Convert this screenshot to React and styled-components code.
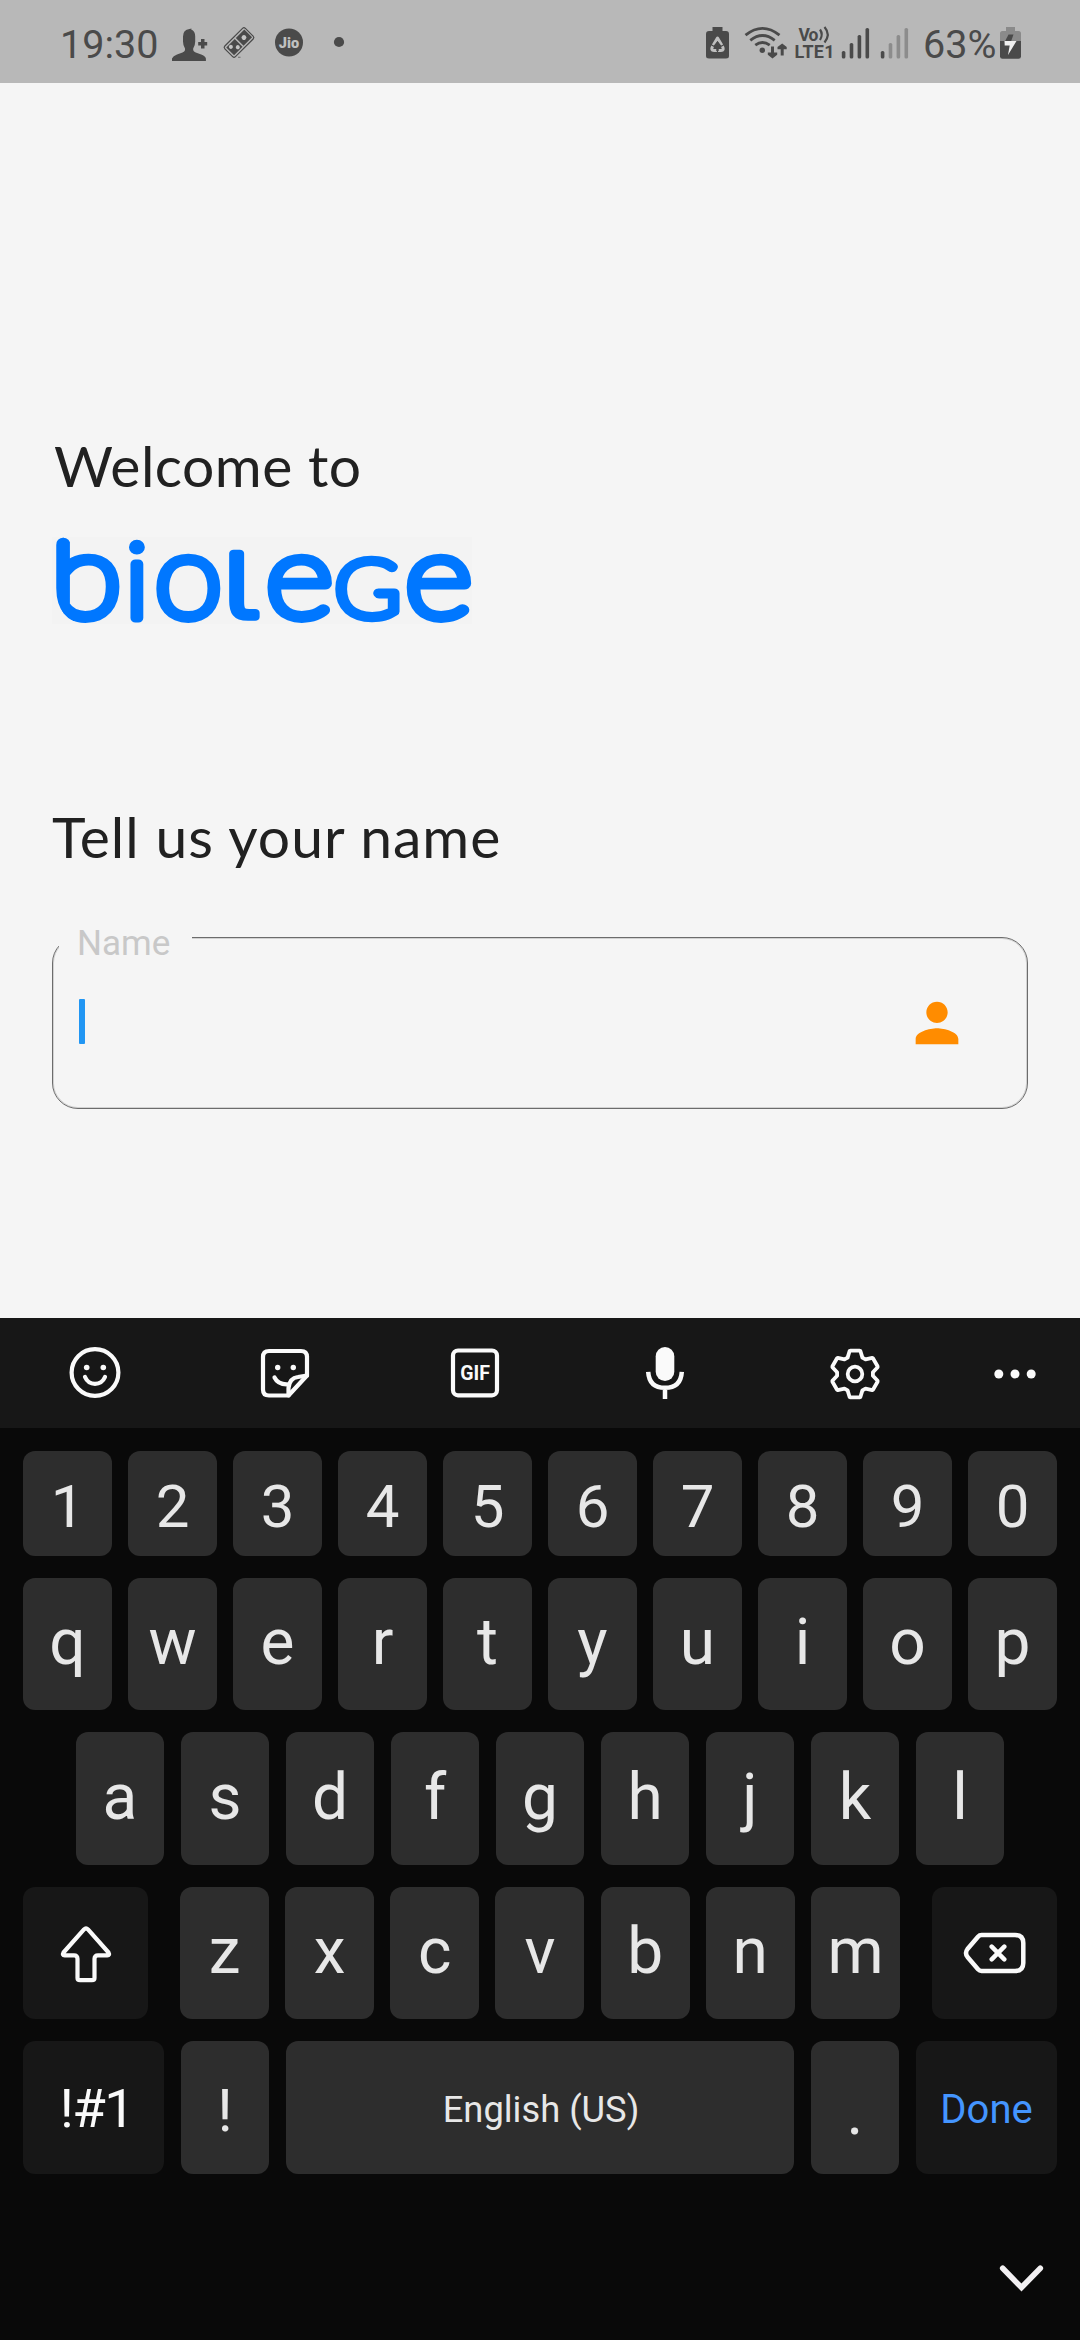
import React from "react";
import styled, { createGlobalStyle } from "styled-components";

const Global = createGlobalStyle`
  html, body { margin: 0; padding: 0; background: #f5f5f5; }
  *, *::before, *::after { box-sizing: border-box; }
`;

const Screen = styled.div`
  width: 1080px;
  height: 2340px;
  display: flex;
  flex-direction: column;
  overflow: hidden;
  background: #f5f5f5;
  font-family: Roboto, "Liberation Sans", sans-serif;
`;

/* ---------- status bar ---------- */

const StatusBar = styled.header`
  height: 83px;
  flex: none;
  display: flex;
  justify-content: space-between;
  padding: 0 58px 0 60px;
  background: #b8b8b8;
  color: #4a4a4a;
`;

const StatusGroup = styled.div`
  display: flex;
  align-items: stretch;
`;

const StatusText = styled.span`
  width: ${(p) => p.$width}px;
  font-size: 39.5px;
  line-height: 89px;
  white-space: nowrap;
`;

const Glyph = styled.svg`
  display: block;
  flex: none;
  overflow: visible;
`;

const StatusIcon = ({ x, w, children }) => (
  <Glyph width={w} height={83} viewBox={`${x} 0 ${w} 83`} fill="#4a4a4a">
    {children}
  </Glyph>
);

const Bars = ({ x, tops, dim }) =>
  tops.map((top, i) => (
    <rect
      key={top}
      x={x + i * 7.9}
      y={top}
      width="3.6"
      height={58.5 - top}
      rx="1.6"
      fill={dim && i > 0 ? "#8c8c8c" : "#4a4a4a"}
    />
  ));

const tops = [51, 43, 35, 28];

/* ---------- form ---------- */

const Main = styled.main`
  height: 1235px;
  flex: none;
  display: flex;
  flex-direction: column;
  padding: 347px 52px 0;
`;

const Heading = styled.h1`
  margin: 0;
  height: 70px;
  padding-left: ${(p) => p.$indent || 0}px;
  font: 400 57px/70px Lato, "Open Sans", sans-serif;
  letter-spacing: ${(p) => p.$spacing}px;
  color: #212121;
  white-space: nowrap;
`;

const Logo = styled.svg`
  display: block;
  width: 420px;
  height: 87px;
  margin: 37px 0 177px;
  overflow: visible;
  background: #f3f3f3;
`;

const LogoLetter = styled.text`
  font-family: ${(p) => p.$family || "Lato"}, sans-serif;
  font-weight: ${(p) => p.$weight || 100};
  font-size: 100px;
  fill: #0077ff;
  stroke: #0077ff;
  stroke-width: ${(p) => p.$stroke || 9.2}px;
  stroke-linejoin: round;
`;

const Field = styled.label`
  position: relative;
  display: flex;
  align-items: center;
  justify-content: space-between;
  width: 976px;
  height: 172px;
  margin-top: 66px;
  padding: 0 58px 0 26px;
  border: 1px solid #6c6c6c;
  border-radius: 26px;
  box-shadow: inset 0 0 0 1px rgba(0, 0, 0, 0.14);
`;

const FieldLabel = styled.span`
  position: absolute;
  left: 6px;
  top: -15px;
  width: 133px;
  height: 42px;
  padding-left: 18px;
  background: #f5f5f5;
  color: #c8c8c8;
  font-size: 35px;
  line-height: 42px;
`;

const Caret = styled.span`
  width: 6px;
  height: 45px;
  margin-top: -4px;
  border-radius: 1px;
  background: #2196f3;
`;

/* ---------- keyboard ---------- */

const Keyboard = styled.section`
  flex: 1;
  display: flex;
  flex-direction: column;
  background: #090909;
`;

const Toolbar = styled.div`
  height: 110px;
  display: grid;
  grid-template-columns: repeat(5, 190px) 130px;
  align-items: center;
  justify-items: center;
  background: #171717;
`;

const Keys = styled.div`
  display: flex;
  flex-direction: column;
  gap: 22px;
  padding: 23px 23px 0;
`;

const KeyRow = styled.div`
  display: flex;
  justify-content: space-between;
  height: ${(p) => p.$height}px;
  padding: 0 ${(p) => p.$inset || 0}px;
`;

const KeyCluster = styled.div`
  display: flex;
  justify-content: space-between;
  width: 720px;
`;

const Key = styled.button`
  display: flex;
  align-items: center;
  justify-content: center;
  width: ${(p) => p.$width || 89}px;
  height: 100%;
  border: 0;
  border-radius: 12px;
  padding: ${(p) => Math.max(p.$drop || 0, 0) * 2}px 0 ${(p) => Math.max(-(p.$drop || 0), 0) * 2}px ${(p) => (p.$nudge || 0) * 2}px;
  background: ${(p) => (p.$dark ? "#171717" : "#2d2d2d")};
  color: ${(p) => p.$color || "#e7e7e7"};
  font-family: inherit;
  font-size: ${(p) => p.$size || 64}px;
  line-height: 1;
  letter-spacing: ${(p) => p.$spacing || 0}px;
  white-space: nowrap;
`;

const BottomBar = styled.div`
  display: flex;
  justify-content: flex-end;
  padding: 88px 34px 0 0;
`;

const GifLabel = styled.text`
  font: 700 19.5px Roboto, sans-serif;
  fill: #fafafa;
`;

const lineProps = {
  fill: "none",
  stroke: "#fafafa",
  strokeWidth: 4.2,
  strokeLinecap: "round",
  strokeLinejoin: "round",
};

const gearPath = (() => {
  const tooth = [
    [-7.4, -16.4],
    [-5.4, -23],
    [-4.6, -23.4],
    [4.6, -23.4],
    [5.4, -23],
    [7.4, -16.4],
  ];
  const points = [];
  for (let k = 0; k < 6; k += 1) {
    const a = (k * Math.PI) / 3;
    tooth.forEach(([x, y]) => {
      points.push([
        (x * Math.cos(a) - y * Math.sin(a)).toFixed(2),
        (x * Math.sin(a) + y * Math.cos(a)).toFixed(2),
      ]);
    });
  }
  return `M${points.map((p) => p.join(" ")).join("L")}Z`;
})();

const ToolIcon = ({ children }) => (
  <Glyph width={60} height={60} viewBox="-30 -30 60 60">
    {children}
  </Glyph>
);

export default function App() {
  return (
    <Screen>
      <Global />
      <StatusBar>
        <StatusGroup>
          <StatusText $width={112}>19:30</StatusText>
          <StatusIcon x={172} w={51}>
            <path d="M172 61v-2.500q1-2.500 5-4l5.500-2q3-1.200 2.500-4-2-3-2-7v-5q0-7 6.500-7.500l2-.5-.3 1q4 1.500 4 7v5q0 4-2 7-.5 2.800 2.500 4l5.500 2q4 1.500 4.700 4v2.500z" />
            <path d="M201 39h3.500v3h2.700v3.500h-2.700v3H201v-3h-2.800V42h2.800z" />
          </StatusIcon>
          <StatusIcon x={223} w={52}>
            <g transform="rotate(-45 239 42.500)">
              <rect x="224.500" y="35" width="29" height="15" rx="2" fill="none" stroke="#4a4a4a" strokeWidth="1.200" />
              <rect x="226.500" y="37" width="12" height="11" />
              <rect x="240" y="37" width="12" height="11" />
              <g fill="#c4c4c4">
                <circle cx="230.200" cy="39.800" r="2" />
                <circle cx="234.800" cy="45" r="2" />
                <circle cx="246" cy="42.500" r="2.400" />
              </g>
            </g>
            <rect x="238" y="56.700" width="2.500" height="1.200" fill="#777" />
          </StatusIcon>
          <StatusIcon x={275} w={59}>
            <circle cx="289" cy="42.500" r="14" />
            <text x="289" y="47.600" textAnchor="middle" fill="#c0c0c0" fontSize="14.500" fontWeight="900" fontFamily="Roboto, sans-serif">
              Jio
            </text>
          </StatusIcon>
          <StatusIcon x={334} w={10}>
            <circle cx="339" cy="42" r="5.100" />
          </StatusIcon>
        </StatusGroup>
        <StatusGroup>
          <StatusIcon x={706} w={39}>
            <path d="M712.500 27h10v4H726q3 0 3 3v22q0 2.500-3 2.500h-17q-3 0-3-2.500V34q0-3 3-3h3.500z" />
            <path d="M717.500 38l5 8.500q2 4-1.500 4h-7q-3.500 0-1.500-4z" fill="none" stroke="#c0c0c0" strokeWidth="3" strokeLinejoin="round" strokeDasharray="8.500 1.200" />
            <path d="M717.500 41l4 5h-2.800v5h-2.400v-5h-2.800z" />
          </StatusIcon>
          <StatusIcon x={745} w={50}>
            <g fill="none" stroke="#4a4a4a" strokeWidth="2.800">
              <path d="M745.500 35.200q17-13.600 34 0" />
              <path d="M750.300 40.300q12.200-9.600 24.400 0" />
              <path d="M755.300 45.200q7.200-5.400 14.400 0" />
            </g>
            <circle cx="762.300" cy="50.300" r="2.700" />
            <path d="M771 46.500h3v6h3.200v2.300l-4.700 3.600-4.700-3.600v-2.300h3.200zM780.700 55.500h3v-6.300h3V47l-4.500-3.600-4.700 3.600v2.200h3.200z" />
          </StatusIcon>
          <StatusIcon x={795} w={48}>
            <text x="798.500" y="40.500" fontSize="17.500" fontWeight="700" fontFamily="Roboto, sans-serif" textLength="20">Vo</text>
            <path d="M820 29.500q3.500 5 0 10.500M824.500 27q6.500 7.500 0 15.500" fill="none" stroke="#4a4a4a" strokeWidth="2.200" />
            <text x="794.500" y="58" fontSize="18" fontWeight="700" fontFamily="Roboto, sans-serif" textLength="40">LTE1</text>
          </StatusIcon>
          <StatusIcon x={843} w={80}>
            <Bars x={841.800} tops={tops} />
            <Bars x={880.800} tops={tops} dim />
          </StatusIcon>
          <StatusText $width={77}>63%</StatusText>
          <StatusIcon x={1000} w={22}>
            <path d="M1006 27h9v4h3.500q2.500 0 2.500 2.500V42h-21v-8.500q0-2.500 2.500-2.500h3.500z" fill="#8a8a8a" />
            <path d="M1000 41h21v15.500q0 2.200-2.500 2.200h-16q-2.500 0-2.500-2.200z" />
            <path d="M1008.500 34.500h5l-2.300 6.500h-6z" />
            <path d="M1004.500 41h12l-8.500 14 1.700-9.500h-5z" fill="#f0f0f0" />
          </StatusIcon>
        </StatusGroup>
      </StatusBar>

      <Main>
        <Heading $spacing={0.5} $indent={2}>Welcome to</Heading>
        <Logo viewBox="52 537 420 87" role="img" aria-label="biolege">
          <defs>
            <clipPath id="stem">
              <path d="M56 545a7 7 0 0 1 14.500 0V553H126v72H86Q57 621 56 588z" />
            </clipPath>
          </defs>
          <g clipPath="url(#stem)">
            <LogoLetter transform="translate(50.200 617) scale(1.310 1.170)">b</LogoLetter>
          </g>
          <LogoLetter $family="Roboto" $stroke={9} transform="translate(125.400 618) scale(1.100 1.020)">i</LogoLetter>
          <LogoLetter transform="translate(154.500 617) scale(1.230 1.170)">o</LogoLetter>
          <LogoLetter $family="'DejaVu Sans'" $weight={200} $stroke={6.5} transform="translate(218 617) scale(1.370 1.160)">ɩ</LogoLetter>
          <LogoLetter transform="translate(265.500 617) scale(1.310 1.170)">e</LogoLetter>
          <LogoLetter $stroke={12} transform="translate(334.500 617) scale(.895 .800)">G</LogoLetter>
          <LogoLetter transform="translate(404.800 617) scale(1.310 1.170)">e</LogoLetter>
        </Logo>
        <Heading $spacing={1.03}>Tell us your name</Heading>
        <Field>
          <FieldLabel>Name</FieldLabel>
          <Caret />
          <Glyph width={64} height={64} viewBox="0 0 24 24" fill="#ff8c00">
            <path d="M12 12c2.210 0 4-1.790 4-4s-1.790-4-4-4-4 1.790-4 4 1.790 4 4 4zm0 2c-2.670 0-8 1.340-8 4v2h16v-2c0-2.660-5.330-4-8-4z" />
          </Glyph>
        </Field>
      </Main>

      <Keyboard>
        <Toolbar>
          <ToolIcon>
            <g transform="translate(0 -.5)">
              <circle r="23.400" {...lineProps} />
              <circle cx="-8.300" cy="-5" r="2.800" fill="#fafafa" />
              <circle cx="8.300" cy="-5" r="2.800" fill="#fafafa" />
              <path d="M-10 4.500q3 6.800 10 6.800t10-6.800" {...lineProps} />
            </g>
          </ToolIcon>
          <ToolIcon>
            <path d="M22-17v19.500L3.500 22.500H-16q-6 0-6-6V-16q0-6 6-6h32q6 0 6 6z" {...lineProps} />
            <path d="M3.500 22.500V15Q4.500 5 13 4l9-1.500" {...lineProps} />
            <circle cx="-7.300" cy="-5.500" r="2.700" fill="#fafafa" />
            <circle cx="8.300" cy="-5.500" r="2.700" fill="#fafafa" />
            <path d="M-10.500 4.500Q-7 11.500 2 11.300" {...lineProps} />
          </ToolIcon>
          <ToolIcon>
            <rect x="-22" y="-22.500" width="44" height="44.800" rx="5" {...lineProps} />
            <GifLabel x="0" y="7" textAnchor="middle">GIF</GifLabel>
          </ToolIcon>
          <ToolIcon>
            <rect x="-9.300" y="-26" width="18.600" height="34" rx="9.300" fill="#fafafa" />
            <path d="M-16.800-1.200q1 16 16.800 16t16.800-16M0 15v11" {...lineProps} strokeWidth="4.500" strokeLinecap="butt" />
          </ToolIcon>
          <ToolIcon>
            <g transform="translate(0 1)">
              <path d={gearPath} {...lineProps} strokeWidth="3.800" />
              <circle r="7.300" {...lineProps} strokeWidth="3.800" />
            </g>
          </ToolIcon>
          <ToolIcon>
            <g fill="#fafafa">
              <circle cx="-16.200" cy="1" r="4.500" />
              <circle cx="0" cy="1" r="4.500" />
              <circle cx="16.200" cy="1" r="4.500" />
            </g>
          </ToolIcon>
        </Toolbar>
        <Keys>
          <KeyRow $height={105}>
            {[..."1234567890"].map((c) => (
              <Key key={c} $size={60} $drop={3}>{c}</Key>
            ))}
          </KeyRow>
          <KeyRow $height={132}>
            {[..."qwertyuiop"].map((c) => (
              <Key key={c} $drop={-1}>{c}</Key>
            ))}
          </KeyRow>
          <KeyRow $height={133} $inset={53}>
            {[..."asdfghjkl"].map((c) => (
              <Key key={c} $width={88} $drop={-1}>{c}</Key>
            ))}
          </KeyRow>
          <KeyRow $height={132}>
            <Key $dark $width={125} aria-label="Shift">
              <Glyph width={60} height={60} viewBox="-30 -30 60 60">
                <path d="M0-24.600q1 0 2 1L22.500-.5q1.500 2.800-1.200 2.800H12q-3.500 0-3.500 3.500V25q0 2.200-2.500 2.200H-6q-2.500 0-2.500-2.200V5.800q0-3.500-3.500-3.500h-9.300q-2.700 0-1.200-2.800L-2-23.600q1-1 2-1z" {...lineProps} />
              </Glyph>
            </Key>
            <KeyCluster>
              {[..."zxcvbnm"].map((c) => (
                <Key key={c} $drop={-1}>{c}</Key>
              ))}
            </KeyCluster>
            <Key $dark $width={125} aria-label="Backspace">
              <Glyph width={64} height={44} viewBox="-32 -22 64 44">
                <path d="M-13.500-18H20q8.300 0 8.300 8V10q0 8-8.300 8h-33.500Q-15.500 18-17 16.300L-27.500 4q-3-4 0-8L-17-16.300q1.500-1.700 3.500-1.700zM-3.300-6.300L9.300 6.300M9.300-6.300L-3.300 6.300" {...lineProps} strokeWidth="4.500" />
              </Glyph>
            </Key>
          </KeyRow>
          <KeyRow $height={133}>
            <Key $dark $width={141} $size={54.5} $drop={1} $nudge={3} $spacing={-1.5} $color="#fafafa">!#1</Key>
            <Key $width={88} $size={60} $drop={3}>!</Key>
            <Key $width={508} $size={36.3} $drop={3} $nudge={1}>English (US)</Key>
            <Key $width={88} $drop={5}>.</Key>
            <Key $dark $width={141} $size={40} $drop={2} $color="#4495ff">Done</Key>
          </KeyRow>
        </Keys>
        <BottomBar>
          <Glyph width={50} height={34} viewBox="0 0 50 34" fill="none" stroke="#f2f0f2" strokeWidth="5.600" strokeLinecap="round">
            <path d="M6.700 6.300L25.500 25.500L44.300 6.300" />
          </Glyph>
        </BottomBar>
      </Keyboard>
    </Screen>
  );
}
